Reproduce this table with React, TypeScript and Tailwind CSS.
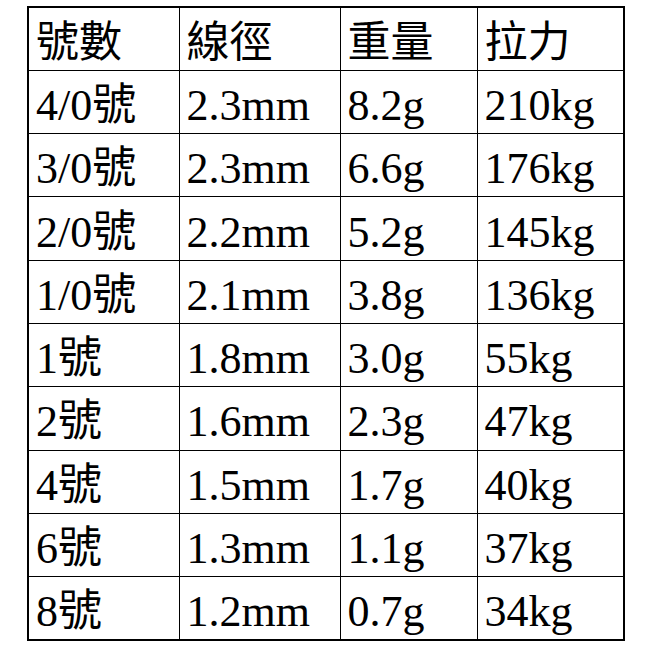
import React from 'react'

const header = ['號數', '線徑', '重量', '拉力']

const rows = [
  ['4/0號', '2.3mm', '8.2g', '210kg'],
  ['3/0號', '2.3mm', '6.6g', '176kg'],
  ['2/0號', '2.2mm', '5.2g', '145kg'],
  ['1/0號', '2.1mm', '3.8g', '136kg'],
  ['1號', '1.8mm', '3.0g', '55kg'],
  ['2號', '1.6mm', '2.3g', '47kg'],
  ['4號', '1.5mm', '1.7g', '40kg'],
  ['6號', '1.3mm', '1.1g', '37kg'],
  ['8號', '1.2mm', '0.7g', '34kg'],
]

const App = () => {
  return (
    <div className="w-[649px] h-[649px] bg-white pt-[6px] pl-[27px] font-['Liberation_Serif','Noto_Sans_CJK_TC',serif] text-black">
      <table className="w-[596px] border-collapse border-[2.5px] border-black table-fixed">
        <colgroup>
          <col className="w-[151px]" />
          <col className="w-[161px]" />
          <col className="w-[137px]" />
          <col className="w-[147px]" />
        </colgroup>
        <tbody>
          <tr className="h-[63.3px]">
            {header.map((h) => (
              <td key={h} className="border border-black pl-[7px] pt-[8px] align-middle text-[43px] leading-none">
                {h}
              </td>
            ))}
          </tr>
          {rows.map((r) => (
            <tr key={r[0]} className="h-[63.3px]">
              {r.map((c, i) => (
                <td key={i} className="border border-black pl-[7px] pt-[8px] align-middle text-[44px] leading-none">
                  {c}
                </td>
              ))}
            </tr>
          ))}
        </tbody>
      </table>
    </div>
  )
}

export default App
